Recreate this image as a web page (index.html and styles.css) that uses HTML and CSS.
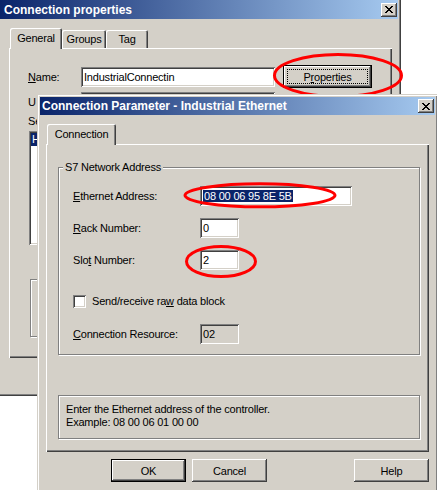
FILE: index.html
```html
<!DOCTYPE html>
<html lang="en">
<head>
    <meta charset="UTF-8">
    <meta name="viewport" content="width=device-width, initial-scale=1.0">
    <title>Connection Parameter - Industrial Ethernet</title>
    <link rel="stylesheet" href="styles.css">
</head>
<body>
<div class="desk">
    <div class="win win-props">
        <div class="titlebar title-props">
            <span>Connection properties</span>
            <span class="close">
                <svg width="8" height="7" viewBox="0 0 8 7"><path d="M0 0h2v1H0zM6 0h2v1H6zM1 1h2v1H1zM5 1h2v1H5zM2 2h4v1H2zM3 3h2v1H3zM2 4h4v1H2zM1 5h2v1H1zM5 5h2v1H5zM0 6h2v1H0zM6 6h2v1H6z" fill="#000"/></svg>
            </span>
        </div>
        <div class="body">
            <div class="tabs tabs-props">
                <div class="tab active tab-general">General</div>
                <div class="tab tab-groups">Groups</div>
                <div class="tab tab-tag">Tag</div>
            </div>
            <div class="panel panel-props">
                <div class="name-row">
                    <label class="lbl-name"><u>N</u>ame:</label>
                    <div class="edit edit-name">IndustrialConnectin</div>
                    <button class="btn btn-default btn-props"><span class="focus">P<u>r</u>operties</span></button>
                </div>
                <div class="id-row">
                    <label class="lbl-name">U</label>
                    <div class="edit edit-name"></div>
                </div>
                <div class="lbl-sel">Se</div>
                <div class="listbox"><div class="item sel">H</div></div>
                <div class="frame"></div>
            </div>
        </div>
    </div>

    <svg class="marks" width="437" height="490" viewBox="0 0 437 490">
        <ellipse cx="338" cy="75.5" rx="63.5" ry="21" fill="none" stroke="#f00" stroke-width="3"/>
    </svg>

    <div class="win win-param">
        <div class="titlebar title-param">
            <span>Connection Parameter - Industrial Ethernet</span>
            <span class="close">
                <svg width="8" height="7" viewBox="0 0 8 7"><path d="M0 0h2v1H0zM6 0h2v1H6zM1 1h2v1H1zM5 1h2v1H5zM2 2h4v1H2zM3 3h2v1H3zM2 4h4v1H2zM1 5h2v1H1zM5 5h2v1H5zM0 6h2v1H0zM6 6h2v1H6z" fill="#000"/></svg>
            </span>
        </div>
        <div class="body">
            <div class="tabs tabs-param">
                <div class="tab active tab-conn">Connection</div>
            </div>
            <div class="panel panel-param">
                <fieldset class="group">
                    <legend>S7 Network Address</legend>
                    <div class="fields">
                        <div class="field">
                            <label><u>E</u>thernet Address:</label>
                            <div class="edit edit-mac"><span class="selected">08 00 06 95 8E 5B</span></div>
                        </div>
                        <div class="field">
                            <label><u>R</u>ack Number:</label>
                            <div class="edit edit-num">0</div>
                        </div>
                        <div class="field">
                            <label>Slo<u>t</u> Number:</label>
                            <div class="edit edit-num">2</div>
                        </div>
                        <div class="check-row">
                            <span class="checkbox"></span>
                            <span>Send/receive ra<u>w</u> data block</span>
                        </div>
                        <div class="field">
                            <label><u>C</u>onnection Resource:</label>
                            <div class="edit edit-num readonly">02</div>
                        </div>
                    </div>
                </fieldset>
                <div class="hint">Enter the Ethernet address of the controller.<br>Example: 08 00 06 01 00 00</div>
            </div>
            <div class="buttons">
                <button class="btn btn-default">OK</button>
                <button class="btn">Cancel</button>
                <button class="btn btn-help">Help</button>
            </div>
        </div>
    </div>

    <svg class="marks" width="437" height="490" viewBox="0 0 437 490">
        <ellipse cx="260" cy="195.3" rx="75" ry="11.5" fill="none" stroke="#f00" stroke-width="3"/>
        <ellipse cx="221" cy="261.5" rx="34.5" ry="15" fill="none" stroke="#f00" stroke-width="3"/>
    </svg>
</div>
</body>
</html>
```

FILE: styles.css
```css
* { box-sizing: border-box; }
body { margin: 0; background: #fff; font-family: "Liberation Sans", Arial, sans-serif; font-size: 11px; letter-spacing: -0.2px; color: #000; }
.desk { position: relative; width: 437px; height: 490px; overflow: hidden; }
.marks { position: absolute; left: 0; top: 0; pointer-events: none; }

/* windows */
.win { position: absolute; display: flex; flex-direction: column; padding: 3px; background: #d4d0c8;
    box-shadow: inset 1px 1px #d4d0c8, inset -1px -1px #404040, inset 2px 2px #fff, inset -2px -2px #808080; }
.win-props { left: -3px; top: -3px; width: 404px; height: 399px; }
.win-param { left: 37px; top: 94px; width: 401px; height: 402px; }

.titlebar { flex: none; display: flex; align-items: center; justify-content: space-between; height: 18px; padding: 0 1px 0 2px;
    background: linear-gradient(to right, #0a246a, #a6caf0); color: #fff; font-size: 12px; font-weight: bold; letter-spacing: 0; white-space: nowrap; }
.title-props { height: 19px; padding-left: 4px; }
.close { display: flex; align-items: center; justify-content: center; width: 16px; height: 14px; background: #d4d0c8;
    box-shadow: inset -1px -1px #404040, inset 1px 1px #fff, inset -2px -2px #808080; }

.body { flex: 1; display: flex; flex-direction: column; padding-top: 9px; }
.win-props .body { padding-left: 9px; }
.win-param .body { padding-left: 6px; }

/* tabs */
.tabs { display: flex; align-items: flex-end; height: 20px; padding-left: 1px; position: relative; z-index: 1; }
.tab { display: flex; align-items: center; justify-content: center; height: 18px; background: #d4d0c8; border-radius: 2px 2px 0 0;
    box-shadow: inset 1px 1px #fff, inset -1px 0 #404040, inset -2px 0 #808080; }
.tab.active { height: 21px; margin-bottom: -1px; padding-bottom: 2px; }
.tab-general { width: 52px; }
.tab-groups { width: 44px; }
.tab-tag { width: 42px; }
.tab-conn { width: 69px; }

.panel { flex: none; width: 383px; background: #d4d0c8;
    box-shadow: inset 1px 1px #fff, inset -1px -1px #404040, inset -2px -2px #808080; }

/* controls */
.edit { display: flex; align-items: center; height: 20px; padding: 0 3px; background: #fff; white-space: nowrap; overflow: hidden;
    box-shadow: inset 1px 1px #808080, inset -1px -1px #fff, inset 2px 2px #404040, inset -2px -2px #d4d0c8; }
.edit.readonly { background: #d4d0c8; }
.selected { background: #0a246a; color: #fff; padding: 0 1px; }

.btn { display: flex; align-items: center; justify-content: center; width: 75px; height: 23px; padding: 0; border: none;
    background: #d4d0c8; font: inherit; letter-spacing: inherit; color: #000;
    box-shadow: inset -1px -1px #404040, inset 1px 1px #fff, inset -2px -2px #808080, inset 2px 2px #d4d0c8; }
.btn-default { border: 1px solid #000; }

.checkbox { width: 13px; height: 13px; background: #fff; flex: none;
    box-shadow: inset 1px 1px #808080, inset -1px -1px #fff, inset 2px 2px #404040, inset -2px -2px #d4d0c8; }

/* connection properties (mostly under the second window) */
.panel-props { height: 310px; padding: 17px 0 0 19px; display: flex; flex-direction: column; align-items: flex-start; }
.name-row { display: flex; align-items: center; height: 23px; }
.id-row { display: flex; align-items: center; height: 20px; margin-top: 4px; }
.lbl-name { width: 53px; }
.edit-name { width: 194px; }
.btn-props { width: 89px; margin-left: 8px; padding: 3px; }
.btn-props .focus { flex: 1; align-self: stretch; display: flex; align-items: center; justify-content: center; border: 1px dotted #000; }
.lbl-sel { line-height: 13px; margin-top: 3px; }
.listbox { width: 340px; height: 114px; margin: 3px 0 0 1px; padding: 2px; background: #fff;
    box-shadow: inset 1px 1px #808080, inset -1px -1px #fff, inset 2px 2px #404040, inset -2px -2px #d4d0c8; }
.item { height: 13px; line-height: 13px; padding-left: 1px; }
.item.sel { background: #0a246a; color: #fff; }
.frame { width: 300px; height: 58px; margin: 34px 0 0 2px; border: 1px solid #808080; box-shadow: inset 1px 1px #fff, 1px 1px #fff; }

/* connection parameter */
.panel-param { height: 308px; padding: 17px 0 0 12px; }
.group { width: 362px; margin: 0; padding: 12px 0 10px; border: 1px solid #808080; box-shadow: inset 1px 1px #fff, 1px 1px #fff; }
.group legend { margin-left: 4px; padding: 0 2px; line-height: 13px; background: #d4d0c8; }
.fields { display: flex; flex-direction: column; gap: 12px; padding-left: 14px; }
.field { display: flex; align-items: center; height: 20px; }
.field label { width: 127px; }
.edit-mac { width: 152px; }
.edit-num { width: 39px; }
.check-row { display: flex; align-items: center; gap: 6px; height: 20px; margin: 9px 0 1px; }
.hint { width: 362px; height: 44px; margin-top: 40px; padding: 7px 7px; line-height: 13px; border: 1px solid #808080;
    box-shadow: inset 1px 1px #fff, 1px 1px #fff; }

.buttons { display: flex; gap: 6px; width: 383px; margin-top: 7px; padding-left: 65px; }
.btn-help { margin-left: auto; }
```
